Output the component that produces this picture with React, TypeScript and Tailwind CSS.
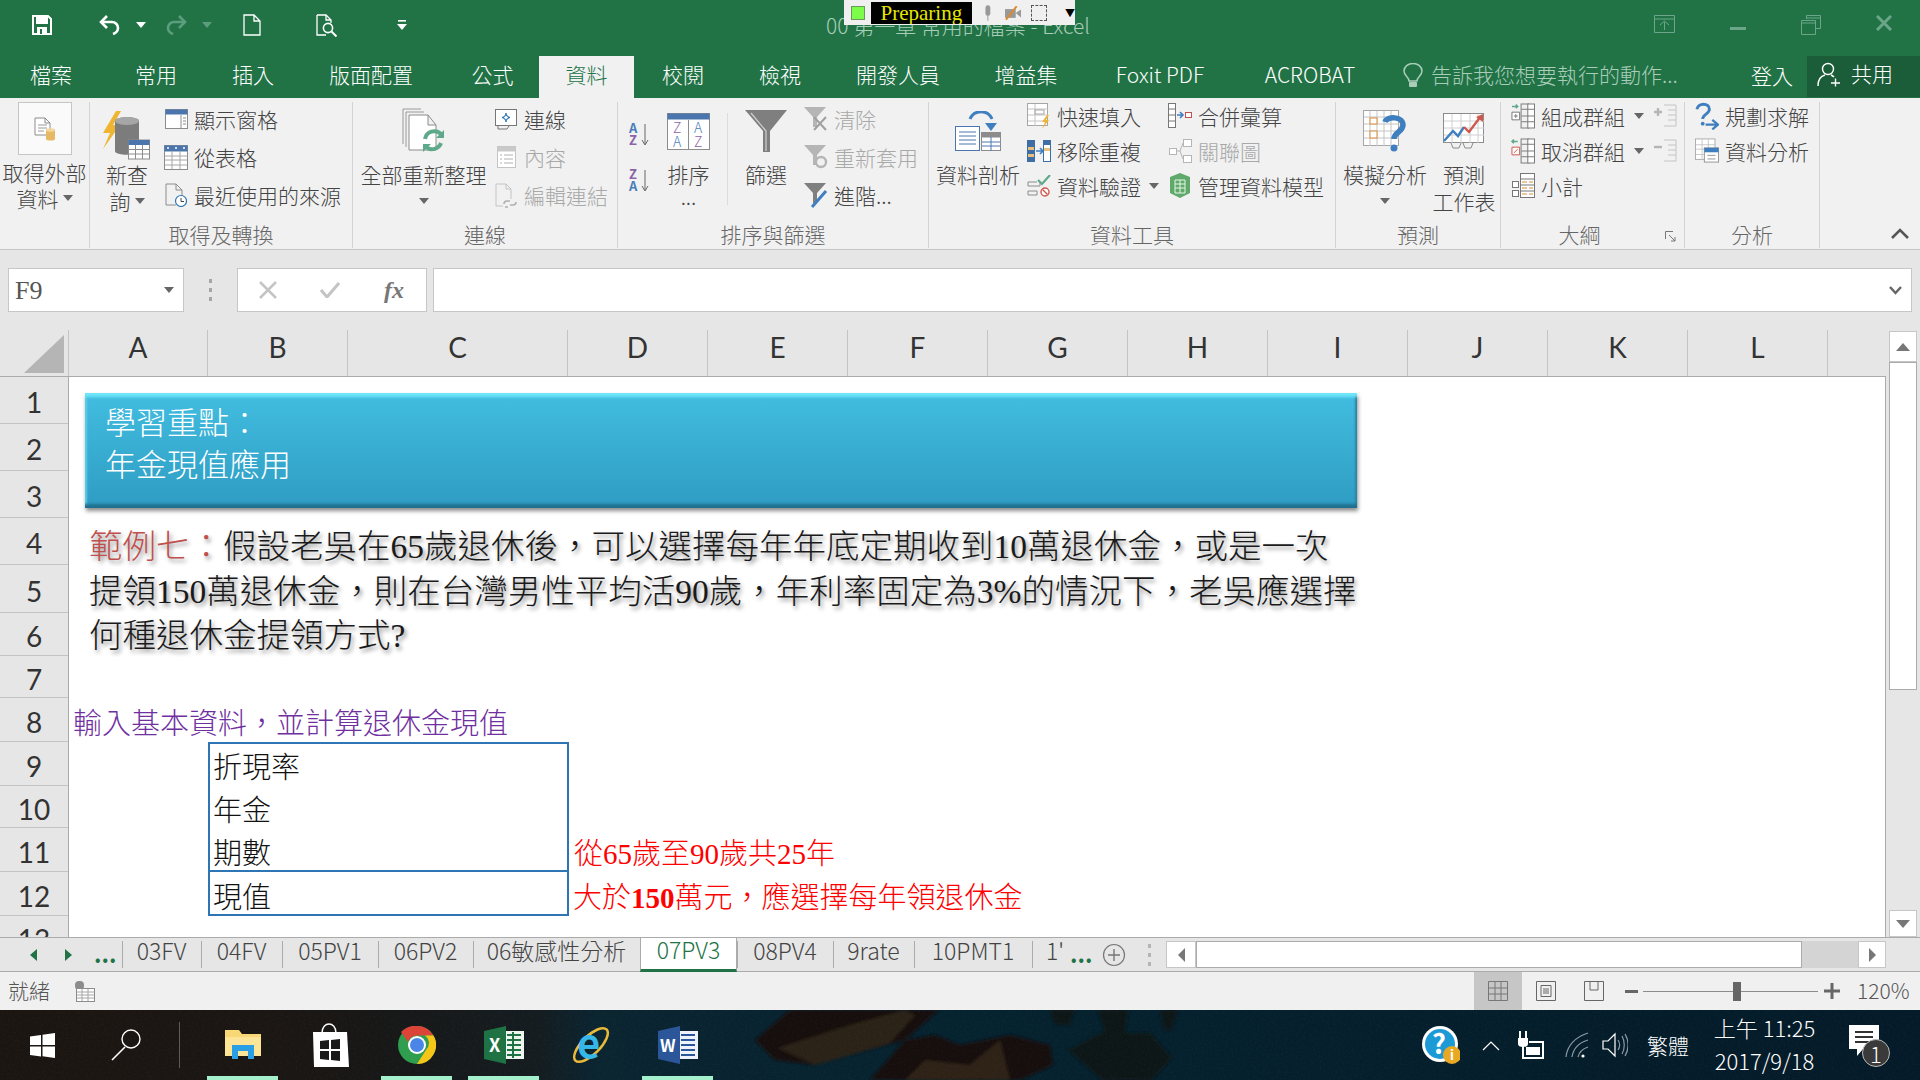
import React from 'react';
import clsx from 'clsx';

const Caret = ({ color = '#666' }: { color?: string }) => (
  <svg width="10" height="6" viewBox="0 0 10 6" className="shrink-0">
    <path d="M0 0h10L5 6z" fill={color} />
  </svg>
);

/* ---------- title bar icons ---------- */
const SaveIcon = () => (
  <svg width="20" height="20" viewBox="0 0 20 20">
    <path d="M1 1h15l3 3v15H1z" fill="none" stroke="#fff" strokeWidth="2" />
    <rect x="4" y="1" width="12" height="8" fill="#fff" />
    <rect x="5" y="12" width="10" height="7" fill="#fff" />
    <rect x="8" y="14" width="2" height="5" fill="#217346" />
  </svg>
);
const UndoIcon = ({ color, flip }: { color: string; flip?: boolean }) => (
  <svg width="22" height="22" viewBox="0 0 22 22" style={flip ? { transform: 'scaleX(-1)' } : undefined}>
    <path d="M8 2 2 8l6 6" fill="none" stroke={color} strokeWidth="2.6" />
    <path d="M3 8h10a6 6 0 0 1 6 6c0 3-2 5-5 6" fill="none" stroke={color} strokeWidth="2.6" />
  </svg>
);
const NewDocIcon = () => (
  <svg width="18" height="22" viewBox="0 0 18 22">
    <path d="M1 1h10l6 6v14H1zM11 1v6h6" fill="none" stroke="#fff" strokeWidth="1.3" />
  </svg>
);
const PreviewIcon = () => (
  <svg width="22" height="23" viewBox="0 0 22 23">
    <path d="M1 1h9l5 5v3M1 1v20h9" fill="none" stroke="#fff" strokeWidth="1.3" />
    <path d="M10 1v5h5" fill="none" stroke="#fff" strokeWidth="1.3" />
    <circle cx="12" cy="14" r="4.6" fill="none" stroke="#fff" strokeWidth="1.6" />
    <path d="m15.5 17.5 5 5" stroke="#fff" strokeWidth="2" />
  </svg>
);
const CustomizeIcon = () => (
  <svg width="10" height="10" viewBox="0 0 10 10">
    <path d="M1 0h8v1.6H1z" fill="#fff" />
    <path d="M0 4h10L5 10z" fill="#fff" />
  </svg>
);

/* ---------- ribbon icons ---------- */
const ExternalIcon = () => (
  <svg width="22" height="24" viewBox="0 0 22 24">
    <path d="M1 1h10l5 5v12H1zM11 1v5h5" fill="#fff" stroke="#8c8c8c" />
    <path d="M4 8h9M4 11h9M4 14h6" stroke="#9a9a9a" />
    <path d="M12 13h9v9c0 2-9 2-9 0z" fill="#e8b964" />
    <ellipse cx="16.5" cy="13" rx="4.5" ry="1.8" fill="#f2d79c" />
  </svg>
);
const NewQueryIcon = () => (
  <svg width="50" height="50" viewBox="0 0 50 50">
    <path d="M14 0 1 22h7L1 38l17-24h-7l8-14z" fill="#efb432" />
    <path d="M13 10c0-5 24-5 24 0v30c0 5-24 5-24 0z" fill="#7c7c7c" />
    <ellipse cx="25" cy="10" rx="12" ry="4" fill="#a6a6a6" />
    <rect x="26.5" y="29" width="21" height="19" fill="#fff" stroke="#8c8c8c" />
    <rect x="26.5" y="29" width="21" height="5" fill="#4a76ad" />
    <path d="M26 38.500h21M26 43h21M33.500 34v14M40.500 34v14" stroke="#8c8c8c" />
  </svg>
);
const PaneIcon = () => (
  <svg width="23" height="20" viewBox="0 0 23 20">
    <rect x=".5" y=".5" width="22" height="19" fill="#fff" stroke="#8c8c8c" />
    <rect x=".5" y=".5" width="22" height="5" fill="#4a76ad" />
    <path d="M16 6v13M18 9h3M18 12h3M18 15h3" stroke="#8c8c8c" />
  </svg>
);
const TableIcon = () => (
  <svg width="24" height="25" viewBox="0 0 24 25">
    <rect x=".5" y=".5" width="23" height="24" fill="#fff" stroke="#8c8c8c" />
    <rect x=".5" y=".5" width="23" height="6" fill="#4a76ad" />
    <path d="M1 11h22M1 15h22M1 20h22M8 6v18M16 6v18" stroke="#a6a6a6" />
    <path d="M4 2v2M12 2v2M20 2v2" stroke="#fff" strokeWidth="1.5" />
  </svg>
);
const RecentIcon = () => (
  <svg width="22" height="24" viewBox="0 0 22 24">
    <path d="M1 1h10l6 6v7M1 1v21h10M11 1v6h6" fill="none" stroke="#8c8c8c" />
    <circle cx="16" cy="18" r="5.500" fill="#fff" stroke="#2f75b5" strokeWidth="1.200" />
    <path d="M16 15v3.500h3" fill="none" stroke="#444" />
  </svg>
);
const RefreshAllIcon = () => (
  <svg width="44" height="46" viewBox="0 0 44 46">
    <path d="M1 1h18M1 1v35M4 4h18M4 4v35" fill="none" stroke="#9a9a9a" />
    <path d="M7 7h19l8 10v25H7zM26 7v10h8" fill="#fff" stroke="#8c8c8c" />
    <path d="M23 31a9.500 9.500 0 0 1 16-5" fill="none" stroke="#5fa98b" strokeWidth="4" />
    <path d="M42 22v8h-8z" fill="#5fa98b" />
    <path d="M39 35a9.500 9.500 0 0 1-15 4" fill="none" stroke="#5fa98b" strokeWidth="4" />
    <path d="M21 44v-8h8z" fill="#5fa98b" />
  </svg>
);
const ConnIcon = () => (
  <svg width="22" height="21" viewBox="0 0 22 21">
    <rect x=".5" y=".5" width="21" height="16" fill="#fff" stroke="#777" />
    <path d="M11 4v9M7 8.500h8" stroke="#2f75b5" strokeWidth="1.500" />
    <rect x="9" y="6.500" width="4" height="4" fill="#fff" stroke="#2f75b5" transform="rotate(45 11 8.500)" />
    <path d="M3 17v3h9l2-3" fill="none" stroke="#777" />
  </svg>
);
const PropsIcon = () => (
  <svg width="19" height="22" viewBox="0 0 19 22">
    <rect x=".5" y=".5" width="18" height="21" fill="#fff" stroke="#c4c4c4" />
    <rect x=".5" y=".5" width="18" height="5" fill="#c9c9c9" />
    <path d="M3 9h2M7 9h9M3 13h2M7 13h9M3 17h2M7 17h9" stroke="#b0b0b0" />
  </svg>
);
const EditLinkIcon = () => (
  <svg width="22" height="25" viewBox="0 0 22 25">
    <path d="M1 1h10l5 5v10M1 1v22h7M11 1v5h5" fill="none" stroke="#c4c4c4" />
    <path d="M9 21a3 3 0 0 1 3-3h3M21 19a3 3 0 0 1-3 3h-3M10 24h3" fill="none" stroke="#b0b0b0" strokeWidth="1.600" />
  </svg>
);
const SortSmallIcon = ({ up }: { up?: boolean }) => (
  <svg width="22" height="26" viewBox="0 0 22 26" className="overflow-visible">
    <text x="0" y="12" fontSize="13" fontWeight="700" fill={up ? '#8a63a8' : '#4a7ebb'}>{up ? 'Z' : 'A'}</text>
    <text x="0" y="24" fontSize="13" fontWeight="700" fill={up ? '#4a7ebb' : '#8a63a8'}>{up ? 'A' : 'Z'}</text>
    <path d="M16 3v20M13 19l3 5 3-5" fill="none" stroke="#666" />
  </svg>
);
const SortBigIcon = () => (
  <svg width="43" height="37" viewBox="0 0 43 37" className="overflow-visible">
    <rect x=".5" y=".5" width="42" height="36" fill="#fff" stroke="#8c8c8c" />
    <rect x=".5" y=".5" width="42" height="6" fill="#4a76ad" />
    <path d="M21.500 7v29" stroke="#8c8c8c" />
    <text x="6" y="20" fontSize="14" fill="#8a63a8">Z</text>
    <text x="6" y="34" fontSize="14" fill="#4a7ebb">A</text>
    <text x="27" y="20" fontSize="14" fill="#4a7ebb">A</text>
    <text x="27" y="34" fontSize="14" fill="#8a63a8">Z</text>
  </svg>
);
const FunnelBigIcon = () => (
  <svg width="42" height="42" viewBox="0 0 42 42">
    <path d="M0 0h42L25 21v21h-7V21z" fill="#7f7f7f" />
    <path d="M6 3l15 18v20" fill="none" stroke="#d0d0d0" strokeWidth="1.200" />
  </svg>
);
const FunnelSmall = ({ color, kind }: { color: string; kind: 'clear' | 'reapply' | 'adv' }) => (
  <svg width="24" height="25" viewBox="0 0 24 25">
    <path d="M0 0h22L13 10v10h-4V10z" fill={color} />
    {kind === 'clear' && <path d="m10 10 12 13M22 10 10 23" stroke="#a0a0a0" strokeWidth="2" />}
    {kind === 'reapply' && <circle cx="17" cy="17" r="5" fill="none" stroke="#b5b5b5" strokeWidth="2.400" />}
    {kind === 'adv' && <path d="M8 24 22 8" stroke="#3f7fbf" strokeWidth="3" />}
  </svg>
);
const TextColumnsIcon = () => (
  <svg width="46" height="40" viewBox="0 0 46 40">
    <path d="M15 11a12 12 0 0 1 22 0" fill="none" stroke="#3f7fbf" strokeWidth="3" transform="translate(0 -3)" />
    <path d="M30 12h12l-6 8z" fill="#3f7fbf" />
    <rect x=".5" y="15.500" width="24" height="24" fill="#fff" stroke="#4a76ad" />
    <path d="M4 21h17M4 25h17M4 29h17M4 33h17" stroke="#4a76ad" />
    <rect x="26.500" y="21.500" width="19" height="18" fill="#fff" stroke="#8c8c8c" />
    <rect x="26.500" y="21.500" width="19" height="5" fill="#8c8c8c" />
    <path d="M27 31h18M27 35h18M36 26v14" stroke="#4a76ad" />
  </svg>
);
const FlashIcon = () => (
  <svg width="24" height="26" viewBox="0 0 24 26">
    <rect x=".5" y=".5" width="20" height="22" fill="#fff" stroke="#a6a6a6" />
    <path d="M1 6h20M1 12h20M1 18h20M8 1v22" stroke="#c4c4c4" />
    <rect x="8" y="7" width="9" height="4" fill="none" stroke="#a6a6a6" />
    <path d="m20 12-5 7h3l-3 7 7-9h-3l3-5z" fill="#efb432" />
  </svg>
);
const RemoveDupIcon = () => (
  <svg width="24" height="22" viewBox="0 0 24 22">
    <rect x="0" y="0" width="8" height="22" fill="#3f6ea5" />
    <rect x="1" y="7" width="6" height="3" fill="#e8c17f" />
    <rect x="1" y="14" width="6" height="3" fill="#e8c17f" />
    <rect x="16.500" y=".5" width="7" height="21" fill="#fff" stroke="#3f6ea5" />
    <rect x="16" y="0" width="8" height="5" fill="#3f6ea5" />
    <rect x="17" y="8" width="6" height="3" fill="#e8c17f" />
    <path d="M9 11h6M13 8l3 3-3 3" fill="none" stroke="#3f7fbf" strokeWidth="1.600" />
  </svg>
);
const ValidationIcon = () => (
  <svg width="24" height="22" viewBox="0 0 24 22">
    <path d="M1 7h9M1 7v4h12V7M1 16h9v4H1z" fill="none" stroke="#8c8c8c" />
    <path d="m11 5 4 4 8-9" fill="none" stroke="#5fa98b" strokeWidth="2.200" />
    <circle cx="18" cy="17" r="4" fill="#fff" stroke="#d0574c" strokeWidth="1.400" />
    <path d="m15.500 14.500 5 5" stroke="#d0574c" strokeWidth="1.400" />
  </svg>
);
const ConsolidateIcon = () => (
  <svg width="24" height="25" viewBox="0 0 24 25">
    <rect x=".5" y=".5" width="7" height="24" fill="#fff" stroke="#777" />
    <path d="M1 6h6M1 12h6M1 18h6" stroke="#777" />
    <path d="M9 12h5M12 9l3 3-3 3" fill="none" stroke="#3f7fbf" strokeWidth="1.600" />
    <rect x="17.500" y="9.500" width="6" height="5" fill="#fff" stroke="#c0504d" />
  </svg>
);
const RelationIcon = () => (
  <svg width="23" height="24" viewBox="0 0 23 24">
    <rect x=".5" y="9.500" width="7" height="6" fill="#fff" stroke="#b5b5b5" />
    <rect x="14.500" y=".5" width="8" height="7" fill="#fff" stroke="#b5b5b5" />
    <rect x="14.500" y="16.500" width="8" height="7" fill="#fff" stroke="#b5b5b5" />
    <path d="M8 12h3l3-8M11 12l3 8" fill="none" stroke="#b5b5b5" />
  </svg>
);
const ModelIcon = () => (
  <svg width="22" height="25" viewBox="0 0 22 25">
    <path d="M11 0 21 4v16l-10 5-10-5V4z" fill="#5fa96b" />
    <path d="M6 7h10v13H6zM6 11h10M6 15h10M11 7v13" fill="none" stroke="#e8f5e8" />
  </svg>
);
const WhatIfIcon = () => (
  <svg width="44" height="42" viewBox="0 0 44 42">
    <rect x=".5" y=".5" width="35" height="35" fill="#fff" stroke="#a6a6a6" />
    <path d="M1 7h35M1 14h35M1 21h35M1 28h35M7 1v35M14 1v35M21 1v35M28 1v35" stroke="#c4c4c4" />
    <rect x="7" y="8" width="7" height="6" fill="#fff" stroke="#d98b3a" />
    <rect x="7" y="21" width="7" height="7" fill="#fff" stroke="#d98b3a" />
    <path d="M22 12c2-6 18-6 18 3 0 7-9 7-9 14" fill="none" stroke="#3f7fbf" strokeWidth="5.500" />
    <circle cx="31" cy="38" r="3.500" fill="#3f7fbf" />
  </svg>
);
const ForecastIcon = () => (
  <svg width="42" height="36" viewBox="0 0 42 36">
    <rect x=".5" y=".5" width="40" height="29" fill="#fff" stroke="#8c8c8c" />
    <path d="M1 8h40M1 15h40M1 22h40M9 1v29M18 1v29M27 1v29M35 1v29" stroke="#d0d0d0" />
    <path d="M1 28l9-10 5 5 6-9" fill="none" stroke="#3f7fbf" strokeWidth="2.400" />
    <path d="m21 14 5 5 12-16" fill="none" stroke="#d0574c" strokeWidth="2.400" />
    <path d="M40 1v8l-7-5z" fill="#d0574c" />
    <path d="M8 30l2 5h6l2-5M20 30l2 5h6l2-5" fill="none" stroke="#8c8c8c" />
  </svg>
);
const GroupIcon = ({ ungroup }: { ungroup?: boolean }) => (
  <svg width="25" height="26" viewBox="0 0 25 26">
    <path d={ungroup ? 'M7 3H1M3 1 1 3l2 2' : 'M1 3h6M5 1l2 2-2 2'} fill="none" stroke="#5fa98b" strokeWidth="1.600" />
    <path d="M1 9h8v8H1z" fill="#fff" stroke={ungroup ? '#d0574c' : '#777'} />
    <path d={ungroup ? 'm3 15 4-4' : 'M3 13h4M5 11v4'} stroke={ungroup ? '#d0574c' : '#777'} />
    <rect x="10.500" y=".5" width="8" height="25" fill="none" stroke="#777" />
    <rect x="17.500" y=".5" width="7" height="25" fill="#fff" stroke="#777" />
    <path d="M11 6h13M11 13h13M11 19h13" stroke="#777" />
  </svg>
);
const SubtotalIcon = () => (
  <svg width="23" height="25" viewBox="0 0 23 25">
    <rect x=".5" y="8.500" width="6" height="6" fill="#fff" stroke="#777" />
    <rect x=".5" y="17.500" width="6" height="6" fill="#fff" stroke="#777" />
    <rect x="8.500" y=".5" width="14" height="24" fill="#fff" stroke="#777" />
    <path d="M9 6h13M9 12h13M9 18h13" stroke="#777" />
    <path d="M10 9h5M17 9h4M10 15h5M17 15h4M10 21h5M17 21h4" stroke="#d98b3a" />
  </svg>
);
const DetailIcon = ({ minus }: { minus?: boolean }) => (
  <svg width="23" height="24" viewBox="0 0 23 24">
    <path d={minus ? 'M0 8h8' : 'M0 8h8M4 4v8'} stroke="#b5b5b5" strokeWidth="2.400" />
    <path d="M10 1h12M14 6h8M14 11h8M14 16h8M10 22h12M22 1v21" fill="none" stroke="#c4c4c4" />
  </svg>
);
const SolverIcon = () => (
  <svg width="25" height="28" viewBox="0 0 25 28">
    <path d="M2 7c1-7 13-7 13 0 0 5-7 5-7 10" fill="none" stroke="#3f7fbf" strokeWidth="3" />
    <circle cx="8" cy="22" r="2" fill="#3f7fbf" />
    <path d="M11 23h11M18 18l6 5-6 5" fill="none" stroke="#3f7fbf" strokeWidth="2.400" />
  </svg>
);
const AnalysisIcon = () => (
  <svg width="27" height="27" viewBox="0 0 27 27">
    <rect x=".5" y=".5" width="22" height="23" fill="#fff" stroke="#a6a6a6" />
    <path d="M1 7h22M1 12h22M1 18h22M8 1v23M15 1v23" stroke="#c4c4c4" />
    <rect x="10.500" y="10.500" width="16" height="16" fill="#fff" stroke="#8c8c8c" />
    <rect x="10.500" y="10.500" width="16" height="5" fill="#3f7fbf" />
    <path d="M14 19h9M14 23h9" stroke="#8c8c8c" />
  </svg>
);

/* ---------- ribbon parts ---------- */
const Group = ({ label, className, labelClass, children }: { label: string; className: string; labelClass?: string; children: React.ReactNode }) => (
  <div className={clsx('flex flex-col shrink-0 h-[146px] mt-[4px] border-r border-[#d4d4d4]', className)}>
    <div className="flex h-[118px]">{children}</div>
    <div className={clsx('h-[28px] pt-[1px] text-center text-[#666] leading-[26px]', labelClass)}>{label}</div>
  </div>
);

const Big = ({ icon, lines, className, caret }: { icon: React.ReactNode; lines: string[]; className: string; caret?: boolean }) => (
  <div className={clsx('flex flex-col items-center shrink-0', className)}>
    <div className="h-[58px] flex items-center justify-center">{icon}</div>
    {lines.map((l) => (
      <div key={l} className="whitespace-nowrap -mb-[1px]">{l}</div>
    ))}
    {caret && <div className="h-[28px] flex items-center"><Caret /></div>}
  </div>
);

const Small = ({ icon, text, muted, tail }: { icon: React.ReactNode; text: string; muted?: boolean; tail?: React.ReactNode }) => (
  <div className={clsx('flex items-center h-full whitespace-nowrap', muted && 'text-[#a8a8a8]')}>
    <div className="w-[24px] flex justify-center mr-[6px]">{icon}</div>
    {text}
    {tail}
  </div>
);

const Ribbon = () => (
  <div className="flex h-[152px] shrink-0 bg-[#f1f1f1] border-b border-[#c6c6c6] text-[21px] leading-[28px] text-[#444] font-light">
    <Group label="" className="w-[90px]">
      <div className="flex flex-col items-center w-full">
        <div className="w-[54px] h-[53px] shrink-0 bg-[#fafafa] border border-[#c6c6c6] flex items-center justify-center">
          <ExternalIcon />
        </div>
        <div className="mt-[3px] whitespace-nowrap">取得外部</div>
        <div className="flex items-center gap-[4px] -mt-[2px]">資料<Caret /></div>
      </div>
    </Group>
    <Group label="取得及轉換" className="w-[263px]">
      <div className="flex flex-col items-center w-[74px] shrink-0">
        <div className="h-[59px] mt-[4px] flex items-center justify-center"><NewQueryIcon /></div>
        <div className="-mt-[5px]">新查</div>
        <div className="flex items-center gap-[4px] -mt-[1px]">詢<Caret /></div>
      </div>
      <div className="grid grid-rows-3 h-[114px] -mt-[2px]">
        <Small icon={<PaneIcon />} text="顯示窗格" />
        <Small icon={<TableIcon />} text="從表格" />
        <Small icon={<RecentIcon />} text="最近使用的來源" />
      </div>
    </Group>
    <Group label="連線" className="w-[265px]">
      <Big className="w-[141px]" icon={<RefreshAllIcon />} lines={['全部重新整理']} caret />
      <div className="grid grid-rows-3 h-[114px] -mt-[2px]">
        <Small icon={<ConnIcon />} text="連線" />
        <Small icon={<PropsIcon />} text="內容" muted />
        <Small icon={<EditLinkIcon />} text="編輯連結" muted />
      </div>
    </Group>
    <Group label="排序與篩選" className="w-[311px]">
      <div className="w-[32px] pl-[11px] pt-[19px] flex flex-col gap-[20px] shrink-0">
        <SortSmallIcon />
        <SortSmallIcon up />
      </div>
      <div className="flex flex-col items-center w-[78px] shrink-0 border-r border-[#dcdcdc] h-[92px] mt-[11px]">
        <div className="h-[47px] shrink-0"><SortBigIcon /></div>
        <div className="shrink-0">排序</div>
        <div className="leading-[16px] shrink-0">...</div>
      </div>
      <Big className="w-[76px]" icon={<FunnelBigIcon />} lines={['篩選']} />
      <div className="grid grid-rows-3 h-[114px] -mt-[2px]">
        <Small icon={<FunnelSmall color="#b5b5b5" kind="clear" />} text="清除" muted />
        <Small icon={<FunnelSmall color="#b5b5b5" kind="reapply" />} text="重新套用" muted />
        <Small icon={<FunnelSmall color="#7f7f7f" kind="adv" />} text="進階..." />
      </div>
    </Group>
    <Group label="資料工具" className="w-[407px]">
      <Big className="w-[98px]" icon={<TextColumnsIcon />} lines={['資料剖析']} />
      <div className="grid grid-rows-3 h-[105px] -mt-[4px] w-[141px] shrink-0">
        <Small icon={<FlashIcon />} text="快速填入" />
        <Small icon={<RemoveDupIcon />} text="移除重複" />
        <Small icon={<ValidationIcon />} text="資料驗證" tail={<span className="ml-[8px]"><Caret /></span>} />
      </div>
      <div className="grid grid-rows-3 h-[105px] -mt-[4px]">
        <Small icon={<ConsolidateIcon />} text="合併彙算" />
        <Small icon={<RelationIcon />} text="關聯圖" muted />
        <Small icon={<ModelIcon />} text="管理資料模型" />
      </div>
    </Group>
    <Group label="預測" className="w-[165px]">
      <Big className="w-[98px]" icon={<WhatIfIcon />} lines={['模擬分析']} caret />
      <Big className="w-[60px]" icon={<ForecastIcon />} lines={['預測', '工作表']} />
    </Group>
    <Group label="大綱" className="w-[184px] relative" labelClass="pr-[26px]">
      <div className="grid grid-rows-3 h-[105px] -mt-[4px] pl-[10px] w-full">
        <Small icon={<GroupIcon />} text="組成群組" tail={<><span className="ml-[9px]"><Caret /></span><span className="ml-[10px]"><DetailIcon /></span></>} />
        <Small icon={<GroupIcon ungroup />} text="取消群組" tail={<><span className="ml-[9px]"><Caret /></span><span className="ml-[10px]"><DetailIcon minus /></span></>} />
        <Small icon={<SubtotalIcon />} text="小計" />
      </div>
      <svg width="11" height="11" viewBox="0 0 11 11" className="absolute right-[8px] bottom-[6px]">
        <path d="M.5 8V.5H8M4 4l6 6M6 10h4V6" fill="none" stroke="#777" />
      </svg>
    </Group>
    <Group label="分析" className="w-[135px]">
      <div className="grid grid-rows-3 h-[105px] -mt-[4px] pl-[10px]">
        <Small icon={<SolverIcon />} text="規劃求解" />
        <Small icon={<AnalysisIcon />} text="資料分析" />
      </div>
    </Group>
    <div className="flex-1 flex items-end justify-end pr-[11px] pb-[10px]">
      <svg width="18" height="11" viewBox="0 0 18 11">
        <path d="m1 10 8-8 8 8" fill="none" stroke="#555" strokeWidth="2.500" />
      </svg>
    </div>
  </div>
);

/* ---------- top ---------- */
const tabs = [
  { t: '檔案', w: 'w-[102px]' },
  { t: '常用', w: 'w-[108px]' },
  { t: '插入', w: 'w-[86px]' },
  { t: '版面配置', w: 'w-[150px]' },
  { t: '公式', w: 'w-[93px]' },
  { t: '資料', w: 'w-[95px]', on: true },
  { t: '校閱', w: 'w-[98px]' },
  { t: '檢視', w: 'w-[96px]' },
  { t: '開發人員', w: 'w-[140px]' },
  { t: '增益集', w: 'w-[116px]' },
  { t: 'Foxit PDF', w: 'w-[152px]' },
  { t: 'ACROBAT', w: 'w-[148px]' },
];

const TitleBar = () => (
  <div className="relative flex items-center h-[56px] shrink-0 bg-[#217346]">
    <div className="flex items-center w-[430px] shrink-0 pb-[6px]">
      <span className="ml-[32px]"><SaveIcon /></span>
      <span className="ml-[47px]"><UndoIcon color="#fff" /></span>
      <span className="ml-[15px]"><Caret color="#fff" /></span>
      <span className="ml-[19px]"><UndoIcon color="#5c9d7e" flip /></span>
      <span className="ml-[15px]"><Caret color="#5c9d7e" /></span>
      <span className="ml-[31px]"><NewDocIcon /></span>
      <span className="ml-[55px]"><PreviewIcon /></span>
      <span className="ml-[59px]"><CustomizeIcon /></span>
    </div>
    <div className="w-[1056px] text-center text-[21px] font-light text-[#a9cdb9] pb-[5px]">00 第一章 常用的檔案 - Excel</div>
    <div className="flex flex-1 pl-[142px] pb-[6px]">
      <div className="w-[73px] flex justify-center">
        <svg width="21" height="18" viewBox="0 0 21 18"><path d="M.5.5h20v17H.5zM1 4h19M10.500 15V7M6 10l4.500-4 4.500 4" fill="none" stroke="#6ca68a" /></svg>
      </div>
      <div className="w-[73px] flex justify-center items-center">
        <div className="w-[16px] h-[3px] mt-[6px] bg-[#6ca68a]" />
      </div>
      <div className="w-[73px] flex justify-center">
        <svg width="20" height="20" viewBox="0 0 20 20"><path d="M5.500 4V.5h14v13H15M.5 5.500h14v14H.5zM1 8h14M6 3h14" fill="none" stroke="#6ca68a" /></svg>
      </div>
      <div className="w-[73px] flex justify-center">
        <svg width="16" height="16" viewBox="0 0 16 16"><path d="m1 1 14 14M15 1 1 15" stroke="#6ca68a" strokeWidth="3" /></svg>
      </div>
    </div>
    {/* recorder widget sits on top of the title */}
    <div className="absolute left-[844px] top-0 w-[231px] h-[25px] bg-[#f0f0f0] flex items-center">
      <div className="ml-[7px] w-[14px] h-[14px] bg-[#7dfc4a] border border-[#6a9a5a]" />
      <div className="ml-[6px] w-[104px] h-[22px] bg-black text-[#e6e600] font-['Liberation_Serif',serif] text-[21px] leading-[22px] text-center overflow-hidden">Preparing</div>
      <svg width="10" height="16" viewBox="0 0 10 16" className="ml-[11px]"><rect x="2.500" width="5" height="11" rx="2.500" fill="#999" /><path d="M5 11v5" stroke="#999" /></svg>
      <svg width="17" height="14" viewBox="0 0 17 14" className="ml-[12px]"><rect y="3" width="11" height="9" fill="#999" /><path d="m11 7 6-4v9z" fill="#999" /><path d="M1 14 12 0" stroke="#e08a2e" strokeWidth="2" /></svg>
      <div className="ml-[10px] w-[16px] h-[16px] border border-dashed border-[#555]" />
      <span className="ml-[18px] text-[10px] leading-none text-black">▼</span>
    </div>
  </div>
);

const TabBar = () => (
  <div className="flex items-stretch h-[42px] shrink-0 bg-[#217346] text-[21px] font-light text-white">
    {tabs.map((tab) => (
      <div
        key={tab.t}
        className={clsx('flex items-center justify-center pb-[4px]', tab.w, tab.on && 'bg-[#f1f1f1] text-[#217346]')}
      >
        {tab.t}
      </div>
    ))}
    <div className="flex items-center ml-[19px] w-[348px] pb-[4px] text-[#a9cdb9] whitespace-nowrap">
      <svg width="20" height="25" viewBox="0 0 20 25" className="mr-[8px]">
        <path d="M6 18c0-4-5-5-5-10a9 7.500 0 0 1 18 0c0 5-5 6-5 10z" fill="none" stroke="#a9cdb9" strokeWidth="1.500" />
        <rect x="6" y="19" width="8" height="5" rx="1" fill="#a9cdb9" />
      </svg>
      告訴我您想要執行的動作...
    </div>
    <div className="w-[56px] flex items-center pb-[3px]">登入</div>
    <div className="flex-1 flex items-center bg-[#1b5c39] mb-[1px] pl-[10px] pb-[5px]">
      <svg width="24" height="25" viewBox="0 0 24 25" className="mr-[10px]">
        <circle cx="11" cy="7" r="5.500" fill="none" stroke="#fff" strokeWidth="1.400" />
        <path d="M1 24c0-6 3-10 7-11M14 13c1 .5 2 1 3 2" fill="none" stroke="#fff" strokeWidth="1.400" />
        <path d="M14 21h9M18.500 16.500v8" stroke="#fff" strokeWidth="1.400" />
      </svg>
      共用
    </div>
  </div>
);

const FormulaBar = () => (
  <div className="flex h-[80px] shrink-0 bg-[#e6e6e6] pt-[18px]">
    <div className="ml-[8px] w-[176px] h-[44px] bg-white border border-[#c6c6c6] flex items-center justify-between pl-[6px] pr-[9px] font-['Liberation_Serif',serif] text-[26px] text-[#555]">
      F9
      <Caret />
    </div>
    <div className="w-[53px] flex flex-col items-center justify-center gap-[5px] h-[44px]">
      <i className="w-[3px] h-[4px] bg-[#a6a6a6]" />
      <i className="w-[3px] h-[4px] bg-[#a6a6a6]" />
      <i className="w-[3px] h-[4px] bg-[#a6a6a6]" />
    </div>
    <div className="w-[190px] h-[44px] bg-white border border-[#c6c6c6] flex items-center">
      <svg width="18" height="18" viewBox="0 0 18 18" className="ml-[21px]"><path d="m1 1 16 16M17 1 1 17" stroke="#c4c4c4" strokeWidth="2.500" /></svg>
      <svg width="20" height="16" viewBox="0 0 20 16" className="ml-[43px]"><path d="m1 8 6 7L19 1" fill="none" stroke="#c4c4c4" strokeWidth="3" /></svg>
      <span className="ml-[44px] font-['Liberation_Serif',serif] italic text-[24px] font-bold text-[#777]">fx</span>
    </div>
    <div className="ml-[6px] w-[1479px] h-[44px] bg-white border border-[#c6c6c6] flex items-center justify-end pr-[9px]">
      <svg width="13" height="9" viewBox="0 0 13 9"><path d="m1 1 5.500 6L12 1" fill="none" stroke="#666" strokeWidth="2.500" /></svg>
    </div>
  </div>
);

/* ---------- sheet ---------- */
const columns = [
  { c: 'A', w: 'w-[139px]' },
  { c: 'B', w: 'w-[140px]' },
  { c: 'C', w: 'w-[220px]' },
  { c: 'D', w: 'w-[140px]' },
  { c: 'E', w: 'w-[140px]' },
  { c: 'F', w: 'w-[140px]' },
  { c: 'G', w: 'w-[140px]' },
  { c: 'H', w: 'w-[140px]' },
  { c: 'I', w: 'w-[140px]' },
  { c: 'J', w: 'w-[140px]' },
  { c: 'K', w: 'w-[140px]' },
  { c: 'L', w: 'w-[140px]' },
];

const rows = [
  { n: 1, h: 'h-[47px]' },
  { n: 2, h: 'h-[47px]' },
  { n: 3, h: 'h-[47px]' },
  { n: 4, h: 'h-[47px]' },
  { n: 5, h: 'h-[48px]' },
  { n: 6, h: 'h-[43px]' },
  { n: 7, h: 'h-[42px]' },
  { n: 8, h: 'h-[44px]' },
  { n: 9, h: 'h-[44px]' },
  { n: 10, h: 'h-[42px]' },
  { n: 11, h: 'h-[44px]' },
  { n: 12, h: 'h-[44px]' },
];

const tableRows = [
  { label: '折現率', h: 'h-[44px]', line: 'border-t-2 pt-[5px]' },
  { label: '年金', h: 'h-[42px]', line: 'pt-[6px]' },
  { label: '期數', h: 'h-[44px]', line: 'border-b-2 pt-[7px]' },
  { label: '現值', h: 'h-[44px]', line: 'border-b-2 pt-[7px]' },
];

const Paragraph = () => (
  <div className="absolute left-[20px] top-[148px] whitespace-nowrap text-[33.500px] leading-[44.500px] text-[#1a1a1a] font-['Liberation_Serif','Noto_Sans_CJK_TC',serif] font-light [text-shadow:2px_3px_4px_rgba(0,0,0,0.45)]">
    <div><span className="text-[#c0504d]">範例七：</span>假設老吳在65歲退休後，可以選擇每年年底定期收到10萬退休金，或是一次</div>
    <div>提領150萬退休金，則在台灣男性平均活90歲，年利率固定為3%的情況下，老吳應選擇</div>
    <div>何種退休金提領方式?</div>
  </div>
);

const Sheet = () => (
  <div className="flex h-[607px] shrink-0 bg-[#e6e6e6]">
    <div className="w-[1886px] shrink-0 flex flex-col">
      <div className="flex h-[47px] shrink-0 border-b border-[#ababab] text-[28px] font-['Lato',sans-serif] text-[#333]">
        <div className="w-[69px] shrink-0 flex items-end justify-end pr-[4px] pb-[3px] border-r border-[#c4c4c4]">
          <svg width="40" height="38" viewBox="0 0 40 38"><path d="M40 0v38H0z" fill="#b5b5b5" /></svg>
        </div>
        {columns.map((col) => (
          <div key={col.c} className={clsx('flex items-center justify-center pb-[12px] border-r border-[#c4c4c4]', col.w)}>{col.c}</div>
        ))}
      </div>
      <div className="flex flex-1 min-h-0 overflow-hidden">
        <div className="w-[69px] shrink-0 flex flex-col border-r border-[#ababab] text-[28px] font-['Lato',sans-serif] text-[#333]">
          {rows.map((r) => (
            <div key={r.n} className={clsx('flex items-center justify-center pt-[4px] shrink-0 border-b border-[#c4c4c4]', r.h)}>{r.n}</div>
          ))}
          <div className="flex justify-center shrink-0 h-[42px] pt-[2px]">13</div>
        </div>
        <div className="relative flex-1 bg-white border-r border-[#ababab] font-['Liberation_Serif','Noto_Sans_CJK_TC',serif] font-light text-[29px] leading-[38px] text-[#111] pt-[321px]">
          {/* banner and text box are floating shapes over the cells */}
          <div className="absolute left-[16px] top-[16px] w-[1272px] h-[115px] pl-[20px] pt-[7px] text-[31px] leading-[42px] text-white font-['Noto_Sans_CJK_TC',sans-serif] font-light bg-[linear-gradient(#41bde0,#2f9cc3)] shadow-[inset_0_7px_3px_-3px_#6fe6fa,inset_0_-6px_3px_-2px_#20708f,inset_3px_0_2px_-1px_#5fd0ea,inset_-3px_0_2px_-1px_#2a86a8,1px_3px_4px_rgba(0,0,0,0.45)]">
            <div>學習重點：</div>
            <div>年金現值應用</div>
          </div>
          <Paragraph />
          <div className="h-[44px] pl-[4px] pt-[7px] text-[#7030a0] whitespace-nowrap">輸入基本資料，並計算退休金現值</div>
          {tableRows.map((row, i) => (
            <div key={row.label} className={clsx('flex', row.h)}>
              <div className={clsx('ml-[139px] w-[361px] shrink-0 pl-[3px] border-x-2 border-[#2e75b6]', row.line)}>{row.label}</div>
              {i === 2 && <div className="ml-[5px] pt-[7px] text-[#ff0000] whitespace-nowrap">從65歲至90歲共25年</div>}
              {i === 3 && <div className="ml-[4px] pt-[7px] text-[#ff0000] whitespace-nowrap">大於<span className="font-bold">150</span>萬元，應選擇每年領退休金</div>}
            </div>
          ))}
        </div>
      </div>
    </div>
    <div className="flex-1 flex flex-col items-center pt-[1px]">
      <div className="w-[28px] h-[31px] bg-white border border-[#c6c6c6] flex items-center justify-center">
        <svg width="14" height="8" viewBox="0 0 14 8"><path d="M0 8h14L7 0z" fill="#777" /></svg>
      </div>
      <div className="w-[28px] h-[328px] bg-white border border-[#ababab]" />
      <div className="flex-1" />
      <div className="w-[28px] h-[27px] bg-white border border-[#c6c6c6] flex items-center justify-center">
        <svg width="14" height="8" viewBox="0 0 14 8"><path d="M0 0h14L7 8z" fill="#777" /></svg>
      </div>
    </div>
  </div>
);

/* ---------- sheet tabs + status ---------- */
const sheetTabs = [
  { t: '03FV', w: 'w-[79px]' },
  { t: '04FV', w: 'w-[81px]' },
  { t: '05PV1', w: 'w-[96px]' },
  { t: '06PV2', w: 'w-[95px]' },
  { t: '06敏感性分析', w: 'w-[167px]' },
  { t: '07PV3', w: 'w-[97px]', on: true },
  { t: '08PV4', w: 'w-[96px]' },
  { t: '9rate', w: 'w-[81px]' },
  { t: '10PMT1', w: 'w-[118px]' },
];

const SheetTabs = () => (
  <div className="flex h-[35px] shrink-0 bg-[#e6e6e6] border-y border-[#ababab] text-[23px] font-light text-[#444]">
    <div className="w-[122px] shrink-0 flex items-center text-[#217346]">
      <svg width="7" height="12" viewBox="0 0 7 12" className="ml-[30px]"><path d="M7 0v12L0 6z" fill="#217346" /></svg>
      <svg width="7" height="12" viewBox="0 0 7 12" className="ml-[28px]"><path d="M0 0v12l7-6z" fill="#217346" /></svg>
      <span className="ml-[22px] -mt-[2px] font-bold leading-none">...</span>
    </div>
    {sheetTabs.map((tab) => (
      <div
        key={tab.t}
        className={clsx(
          'flex items-center justify-center shrink-0 -my-px pb-[9px]',
          tab.w,
          tab.on
            ? 'bg-white text-[#217346] border-x border-t border-[#ababab] border-b-[3px] border-b-[#217346]'
            : 'relative before:absolute before:left-0 before:top-[4px] before:bottom-[4px] before:w-px before:bg-[#ababab]',
        )}
      >
        {tab.t}
      </div>
    ))}
    <div className="flex items-center w-[134px] shrink-0 border-l border-[#ababab] my-[3px] pl-[13px]">
      <span className="-mt-[8px]">1'</span>
      <span className="ml-[6px] -mt-[2px] font-bold text-[#217346] leading-none">...</span>
      <svg width="24" height="24" viewBox="0 0 24 24" className="ml-[9px]">
        <circle cx="12" cy="12" r="10.500" fill="none" stroke="#777" strokeWidth="1.200" />
        <path d="M12 6v12M6 12h12" stroke="#777" strokeWidth="1.400" />
      </svg>
      <div className="ml-[22px] flex flex-col gap-[5px]">
        <i className="w-[3px] h-[4px] bg-[#b5b5b5]" />
        <i className="w-[3px] h-[4px] bg-[#b5b5b5]" />
        <i className="w-[3px] h-[4px] bg-[#b5b5b5]" />
      </div>
    </div>
    <div className="flex my-[3px] w-[720px] shrink-0">
      <div className="w-[30px] bg-white border border-[#c6c6c6] flex items-center justify-center">
        <svg width="7" height="14" viewBox="0 0 7 14"><path d="M7 0v14L0 7z" fill="#777" /></svg>
      </div>
      <div className="w-[606px] bg-white border border-[#ababab]" />
      <div className="flex-1 bg-[#d4d4d4]" />
      <div className="w-[28px] bg-white border border-[#c6c6c6] flex items-center justify-center">
        <svg width="7" height="14" viewBox="0 0 7 14"><path d="M0 0v14l7-7z" fill="#777" /></svg>
      </div>
    </div>
  </div>
);

const StatusBar = () => (
  <div className="flex items-center h-[38px] shrink-0 bg-[#f0f0f0] text-[21px] font-light text-[#555]">
    <span className="ml-[8px]">就緒</span>
    <svg width="21" height="21" viewBox="0 0 21 21" className="ml-[24px]">
      <rect x="1" y="0" width="9" height="9" rx="4" fill="#8c8c8c" />
      <rect x="2.500" y="7.500" width="18" height="13" fill="#fff" stroke="#8c8c8c" />
      <path d="M3 11h17M3 14h17M3 17h17M8 8v12M14 8v12" stroke="#a6a6a6" />
    </svg>
    <div className="ml-[1379px] w-[48px] h-full bg-[#c6c6c6] flex items-center justify-center">
      <svg width="20" height="20" viewBox="0 0 20 20"><path d="M.5.5h19v19H.5zM7 1v18M13 1v18M1 7h18M1 13h18" fill="none" stroke="#777" /></svg>
    </div>
    <svg width="20" height="20" viewBox="0 0 20 20" className="ml-[14px]"><path d="M.5.5h19v19H.5zM5 4.500h10v11H5zM7 8h6M7 10h6M7 12h6" fill="none" stroke="#666" /></svg>
    <svg width="20" height="20" viewBox="0 0 20 20" className="ml-[28px]"><path d="M.5.5h19v19H.5zM6 1v8h8V1" fill="none" stroke="#666" /></svg>
    <div className="ml-[21px] w-[13px] h-[3px] bg-[#666]" />
    <div className="ml-[5px] relative w-[175px] h-[1px] bg-[#8c8c8c]">
      <div className="absolute left-[90px] -top-[9px] w-[8px] h-[19px] bg-[#666]" />
    </div>
    <svg width="16" height="16" viewBox="0 0 16 16" className="ml-[6px]"><path d="M8 0v16M0 8h16" stroke="#666" strokeWidth="3" /></svg>
    <span className="ml-[17px]">120%</span>
  </div>
);

/* ---------- taskbar ---------- */
const Slot = ({ on, children }: { on?: boolean; children: React.ReactNode }) => (
  <div className="relative h-full flex items-center justify-center shrink-0 w-[87px]">
    {children}
    {on && <div className="absolute left-[8px] right-[8px] bottom-0 h-[4px] bg-[#a5f0cc]" />}
  </div>
);

const Wallpaper = () => (
  <svg width="1920" height="70" viewBox="0 0 1920 70" className="absolute inset-0">
    <defs>
      <linearGradient id="wall" x1="0" x2="1" y1="0" y2="0">
        <stop offset="0" stopColor="#1b1511" />
        <stop offset=".16" stopColor="#1a1613" />
        <stop offset=".2" stopColor="#171717" />
        <stop offset=".28" stopColor="#141c20" />
        <stop offset=".31" stopColor="#0a2430" />
        <stop offset=".5" stopColor="#05222f" />
        <stop offset="1" stopColor="#041a28" />
      </linearGradient>
      <filter id="soft"><feGaussianBlur stdDeviation="1.500" /></filter>
      <filter id="grain">
        <feTurbulence type="fractalNoise" baseFrequency=".5" numOctaves="2" />
        <feColorMatrix values="0 0 0 0 1 0 0 0 0 1 0 0 0 0 1 0 0 0 .5 -.2" />
      </filter>
    </defs>
    <rect width="1920" height="70" fill="url(#wall)" />
    <g filter="url(#soft)">
      <path d="M755 30 790 0h149l-34 30-90 25-40-5z" fill="#15100c" />
      <path d="M778 38 850 15l55-15 10 5-25 28-75 22z" fill="#2c2119" />
      <path d="M870 70 905 30l30-5 25 10 50-10 40 10 3 20-33 15z" fill="#15100c" />
      <path d="M905 70 925 50l45 5 30-25 10 40z" fill="#2e2116" />
      <path d="M1068 40 1100 23h50l22 25-20 22-50 0z" fill="#0f1412" />
      <path d="M1050 0h25l-5 15h-15zM1098 0h30l-3 23h-20zM1160 0h18l-6 20h-8z" fill="#0f1412" />
    </g>
    <rect width="1920" height="70" filter="url(#grain)" opacity=".12" />
  </svg>
);

const Taskbar = () => (
  <div className="relative flex h-[70px] shrink-0 overflow-hidden bg-[#07202d] text-white">
    <Wallpaper />
    <div className="relative flex items-center h-full w-[1400px] shrink-0">
      <div className="w-[84px] shrink-0 flex justify-center">
        <svg width="25" height="25" viewBox="0 0 25 25"><path d="M0 3.500 11 2v10H0zM12.500 1.800 25 0v12H12.500zM0 13.500h11v10L0 22zM12.500 13.500H25V25l-12.500-1.800z" fill="#fff" /></svg>
      </div>
      <div className="w-[84px] shrink-0 flex justify-center">
        <svg width="30" height="32" viewBox="0 0 30 32"><circle cx="20" cy="10" r="9" fill="none" stroke="#fff" strokeWidth="1.400" /><path d="m14 18-13 13" stroke="#fff" strokeWidth="1.600" /></svg>
      </div>
      <div className="w-[20px] shrink-0 h-[46px] border-l border-[#5a5a5a] ml-[11px]" />
      <Slot on>
        <svg width="38" height="36" viewBox="0 0 38 36">
          <path d="M1 3h14l3 4h19v22H1z" fill="#f8d775" />
          <path d="M1 10h36v19H1z" fill="#fde597" />
          <path d="M8 32V18h22v14h-6V24H14v8z" fill="#2b9fe6" />
        </svg>
      </Slot>
      <Slot>
        <svg width="38" height="44" viewBox="0 0 38 44">
          <path d="M11 10c0-12 14-12 14 0" fill="none" stroke="#fff" strokeWidth="1.400" />
          <path d="M2 9h34l2 35H3z" fill="#fff" />
          <path d="m9 18 9-1v9H9zM20 17l9-1v10h-9zM9 28h9v9l-9-1zM20 28h9v10l-9-1z" fill="#1a1a1a" />
        </svg>
      </Slot>
      <Slot on>
        <svg width="38" height="38" viewBox="0 0 38 38">
          <circle cx="19" cy="19" r="19" fill="#2f9e4f" />
          <path d="M19 0a19 19 0 0 1 16.500 9.500H19a9.500 9.500 0 0 0-9 6.500L3 6a19 19 0 0 1 16-6z" fill="#dc4437" />
          <path d="M35.500 9.500A19 19 0 0 1 19 38l9-14a9.500 9.500 0 0 0-1-14.500z" fill="#f5c518" />
          <circle cx="19" cy="19" r="9" fill="#fff" />
          <circle cx="19" cy="19" r="7" fill="#4a86e8" />
        </svg>
      </Slot>
      <Slot on>
        <svg width="40" height="38" viewBox="0 0 40 38">
          <rect x="20" y="5" width="20" height="28" fill="#eef5ef" />
          <path d="M23 9h14M23 14h14M23 19h14M23 24h14M23 29h14M29 6v26" stroke="#1f7244" strokeWidth="2" />
          <path d="M0 5 22 0v38L0 33z" fill="#1f7244" />
          <text x="5" y="26" fontSize="18" fontWeight="700" fill="#fff">X</text>
        </svg>
      </Slot>
      <Slot>
        <svg width="40" height="38" viewBox="0 0 40 38" className="overflow-visible">
          <ellipse cx="20" cy="19" rx="22" ry="9" fill="none" stroke="#e8b93a" strokeWidth="2.500" transform="rotate(-45 20 19)" />
          <text x="6" y="32" fontSize="40" fontWeight="700" fill="#35b8e8">e</text>
        </svg>
      </Slot>
      <Slot on>
        <svg width="40" height="38" viewBox="0 0 40 38">
          <rect x="20" y="5" width="20" height="28" fill="#eef2fa" />
          <path d="M23 9h14M23 14h14M23 19h14M23 24h14M23 29h14" stroke="#2b579a" strokeWidth="2" />
          <path d="M0 5 22 0v38L0 33z" fill="#2b579a" />
          <text x="2" y="26" fontSize="17" fontWeight="700" fill="#fff">W</text>
        </svg>
      </Slot>
    </div>
    <div className="relative flex items-center h-full flex-1 pl-[22px] font-light">
      <svg width="38" height="40" viewBox="0 0 38 40" className="shrink-0">
        <circle cx="18" cy="19" r="18" fill="#fff" />
        <circle cx="18" cy="19" r="15" fill="#1c9ad6" />
        <text x="10" y="29" fontSize="27" fontWeight="700" fill="#fff">?</text>
        <circle cx="30" cy="30" r="9" fill="#e9a823" />
        <text x="28" y="35" fontSize="13" fontWeight="700" fill="#fff">i</text>
      </svg>
      <svg width="18" height="11" viewBox="0 0 18 11" className="ml-[22px]"><path d="m1 10 8-8 8 8" fill="none" stroke="#fff" strokeWidth="1.200" /></svg>
      <svg width="28" height="30" viewBox="0 0 28 30" className="ml-[17px]">
        <path d="M3 1v7M9 1v7" stroke="#fff" strokeWidth="2" />
        <path d="M1 8h10v6c0 2-2 3-5 3s-5-1-5-3z" fill="#fff" />
        <path d="M6 16v12h20V12H12" fill="none" stroke="#fff" strokeWidth="2" />
        <rect x="9" y="17" width="14" height="8" fill="#fff" />
      </svg>
      <svg width="24" height="26" viewBox="0 0 24 26" className="ml-[20px]">
        <path d="M1 25C2 14 10 5 23 1M7 25C8 18 13 11 23 8M13 25c1-4 4-8 10-10" fill="none" stroke="#8a9aa5" strokeWidth="1.200" />
        <circle cx="18" cy="24" r="1.600" fill="#fff" />
      </svg>
      <svg width="26" height="26" viewBox="0 0 26 26" className="ml-[13px]">
        <path d="M1 9h5l7-7v22l-7-7H1z" fill="none" stroke="#fff" strokeWidth="1.200" />
        <path d="M16 8c2 3 2 7 0 10M20 4c3 5 3 13 0 18M23 2c4 7 4 15 0 22" fill="none" stroke="#8a9aa5" strokeWidth="1.200" />
      </svg>
      <span className="ml-[19px] text-[21px] leading-[22px] w-[44px]">繁體</span>
      <div className="ml-[22px] pb-[3px] flex flex-col items-center text-[22px] leading-[33px] w-[103px] whitespace-nowrap">
        <div>上午 11:25</div>
        <div>2017/9/18</div>
      </div>
      <div className="relative ml-[33px] w-[30px] h-[30px] -mt-[10px]">
        <svg width="30" height="36" viewBox="0 0 30 36"><path d="M0 0h30v24H14l-6 7v-7H0z" fill="#fff" /><path d="M6 7h18M6 12h18M6 17h18" stroke="#333" strokeWidth="2" /></svg>
        <div className="absolute left-[13px] top-[14px] w-[28px] h-[28px] rounded-full bg-[#3a3a3a] border border-[#bbb] flex items-center justify-center text-[22px] leading-none">1</div>
      </div>
    </div>
  </div>
);

export default function App() {
  return (
    <div className="flex flex-col w-[1920px] h-[1080px] overflow-hidden font-['Noto_Sans_CJK_TC','Noto_Sans',sans-serif]">
      <TitleBar />
      <TabBar />
      <Ribbon />
      <FormulaBar />
      <Sheet />
      <SheetTabs />
      <StatusBar />
      <Taskbar />
    </div>
  );
}
